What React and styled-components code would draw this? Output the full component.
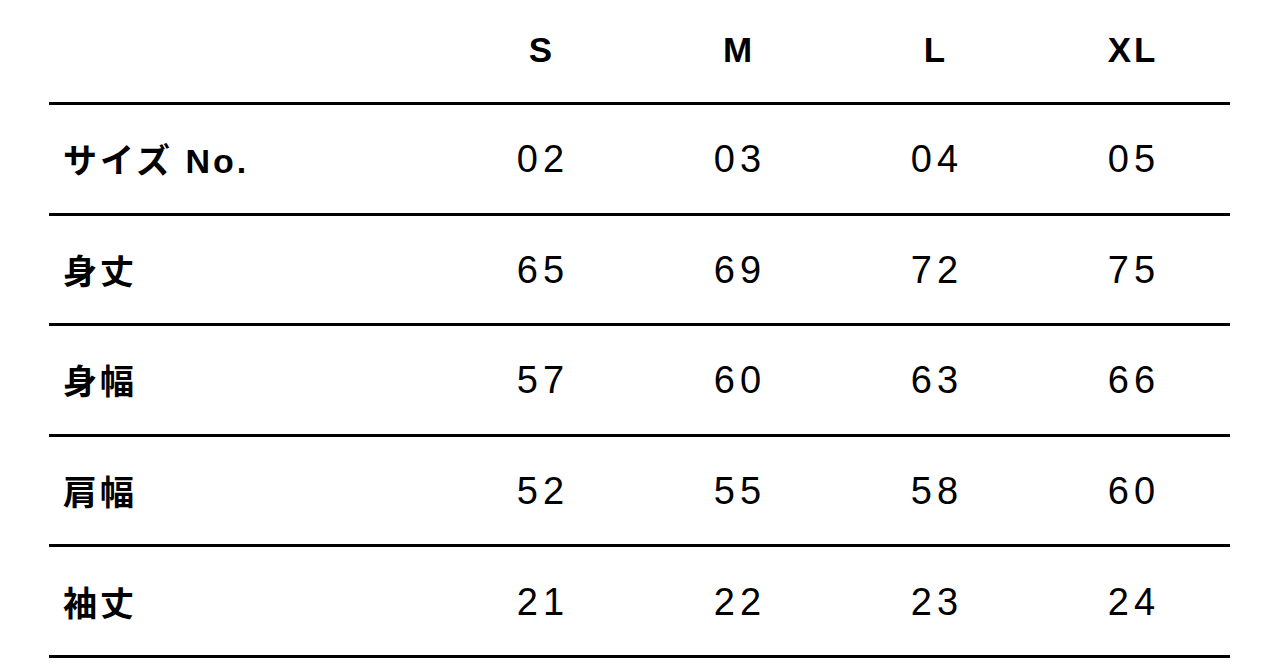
import React from "react";
import styled, { createGlobalStyle } from "styled-components";

const GlobalStyle = createGlobalStyle`
  html, body {
    margin: 0;
    padding: 0;
    background: #ffffff;
  }
`;

const Page = styled.div`
  padding: 0 50px 0 49px;
  font-family: "Liberation Sans", "Noto Sans CJK JP", sans-serif;
  color: #000000;
`;

const Row = styled.div`
  display: grid;
  grid-template-columns: 393px repeat(4, 1fr);
  align-items: center;
  height: ${props => (props.head ? "102px" : "107.6px")};
  border-bottom: 3px solid #000000;
`;

const Label = styled.div`
  padding-left: 14px;
  font-size: 34px;
  font-weight: 700;
  letter-spacing: 3px;
`;

const SizeHead = styled.div`
  text-align: center;
  font-size: 35px;
  font-weight: 700;
  letter-spacing: 3px;
  padding-left: 3px;
  padding-bottom: 2px;
`;

const Value = styled.div`
  text-align: center;
  font-size: 38px;
  font-weight: 400;
  letter-spacing: 5px;
  padding-left: 5px;
  padding-top: 2px;
`;

const sizes = ["S", "M", "L", "XL"];

const rows = [
  { label: "サイズ No.", values: ["02", "03", "04", "05"] },
  { label: "身丈", values: ["65", "69", "72", "75"] },
  { label: "身幅", values: ["57", "60", "63", "66"] },
  { label: "肩幅", values: ["52", "55", "58", "60"] },
  { label: "袖丈", values: ["21", "22", "23", "24"] }
];

export default () => {
  return (
    <>
      <GlobalStyle />
      <Page>
        <Row head>
          <div />
          {sizes.map(s => (
            <SizeHead key={s}>{s}</SizeHead>
          ))}
        </Row>
        {rows.map(r => (
          <Row key={r.label}>
            <Label>{r.label}</Label>
            {r.values.map((v, i) => (
              <Value key={i}>{v}</Value>
            ))}
          </Row>
        ))}
      </Page>
    </>
  );
};
